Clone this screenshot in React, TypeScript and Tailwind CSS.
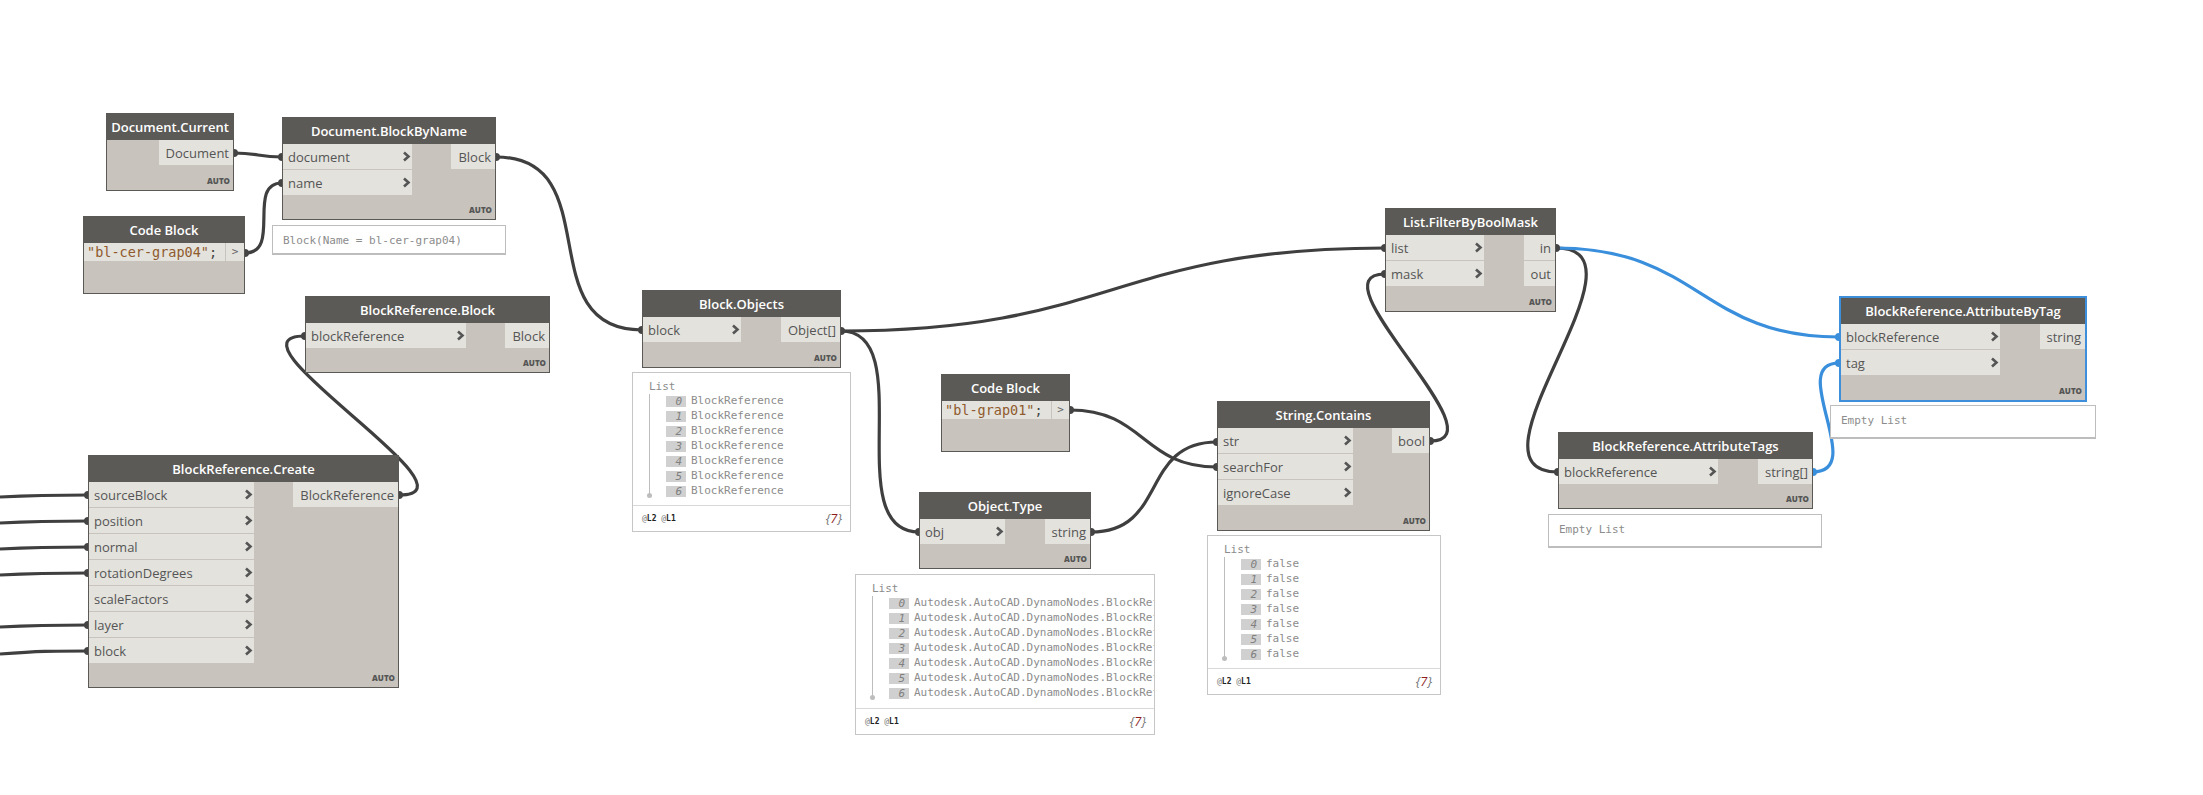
import React from 'react'

const uiFont = "font-['Open_Sans',sans-serif]"

const wires = [
  'M234 153 C258 153 258 157 282 157',
  'M245 253 C282 253 246 183 282 183',
  'M496 157 C610 157 528 330 642 330',
  'M841 331 C1113 331 1113 248 1385 248',
  'M841 331 C920 331 838 532 919 532',
  'M1091 532 C1168 532 1140 442 1217 442',
  'M1070 410 C1145 410 1142 467 1217 467',
  'M1430 441 C1505 441 1310 274 1385 274',
  'M1556 248 C1660 248 1454 472 1558 472',
  'M399 495 C489 495 215 336 305 336',
  'M0 497 C40 495 50 495 88 495',
  'M0 523 C40 521 50 521 88 521',
  'M0 549 C40 547 50 547 88 547',
  'M0 575 C40 573 50 573 88 573',
  'M0 627 C40 625 50 625 88 625',
  'M0 654 C40 651 50 651 88 651',
]

const blueWires = [
  'M1556 248 C1700 248 1700 337 1839 337',
  'M1813 472 C1868 472 1786 363 1839 363',
]

const ports = [
  [234, 153], [282, 157], [282, 183], [245, 253], [496, 157], [642, 330], [841, 331], [305, 336], [399, 495],
  [88, 495], [88, 521], [88, 547], [88, 573], [88, 625], [88, 651], [919, 532], [1091, 532], [1070, 410],
  [1217, 442], [1217, 467], [1430, 441], [1385, 248], [1385, 274], [1556, 248], [1558, 472],
]

const bluePorts = [[1839, 337], [1839, 363], [1813, 472]]

function Chevron() {
  return (
    <svg width="9" height="11" viewBox="0 0 9 11" className="shrink-0">
      <path d="M2 1.5 L6.5 5.5 L2 9.5" fill="none" stroke="#555555" strokeWidth="2.6" />
    </svg>
  )
}

function Node({ pos, title, inputs, outputs, inWidth, outWidth, selected }: {
  pos: string
  title: string
  inputs: string[]
  outputs: string[]
  inWidth: string
  outWidth: string
  selected?: boolean
}) {
  return (
    <div className={`absolute flex flex-col bg-[#c8c4bd] ${uiFont} ${pos} ${selected ? 'border-2 border-[#3d8fdb]' : 'border border-[#5b5955]'}`}>
      <div className="h-[26px] shrink-0 pt-[2px] bg-[#5c5a57] text-white text-[13px] font-semibold flex items-center justify-center whitespace-nowrap">
        {title}
      </div>
      <div className="flex justify-between flex-1">
        <div className={`flex flex-col gap-px ${inWidth}`}>
          {inputs.map((name) => (
            <div key={name} className="h-[25px] bg-[#e3e2dd] text-[#555555] text-[13px] flex items-center justify-between pl-[5px] pr-[1px]">
              <span className="pt-[2px]">{name}</span>
              <Chevron />
            </div>
          ))}
        </div>
        <div className={`flex flex-col gap-px ${outWidth}`}>
          {outputs.map((name) => (
            <div key={name} className="h-[25px] pt-[2px] bg-[#e3e2dd] text-[#555555] text-[13px] flex items-center justify-end pr-[4px] whitespace-nowrap">
              {name}
            </div>
          ))}
        </div>
      </div>
      <div className="h-[20px] shrink-0 pt-[1px] flex items-center justify-end pr-[3px] text-[8px] font-extrabold text-[#555555]">AUTO</div>
    </div>
  )
}

function CodeBlock({ pos, code, codeWidth }: { pos: string; code: string; codeWidth: string }) {
  return (
    <div className={`absolute flex flex-col bg-[#c8c4bd] border border-[#5b5955] ${pos}`}>
      <div className={`h-[26px] pt-[2px] bg-[#5c5a57] text-white text-[13px] font-semibold flex items-center justify-center ${uiFont}`}>Code Block</div>
      <div className="flex h-[18px] gap-px">
        <div className={`bg-[#e3e2dd] text-[13.5px] leading-[18px] pl-[3px] whitespace-nowrap font-['DejaVu_Sans_Mono',monospace] ${codeWidth}`}>
          <span className="text-[#8f5a2c]">{code}</span><span className="text-[#444444]">;</span>
        </div>
        <div className="flex-1 bg-[#e3e2dd] text-[#666666] text-[11px] leading-[18px] text-center font-['DejaVu_Sans_Mono',monospace]">&gt;</div>
      </div>
    </div>
  )
}

function ListPreview({ pos, item }: { pos: string; item: string }) {
  const rows = ['0', '1', '2', '3', '4', '5', '6']
  return (
    <div className={`absolute flex flex-col bg-white border border-[#c6c6c6] font-['DejaVu_Sans_Mono',monospace] text-[11px] text-[#8c8c8c] ${pos}`}>
      <div className="flex-1 overflow-hidden pl-4 pt-[7px]">
        <div className="h-[14px] leading-[14px]">List</div>
        <div className="flex">
          <div className="relative w-[17px] h-[102px] shrink-0 border-l border-[#bdbdbd]">
            <span className="absolute -left-[3px] -bottom-[2px] w-[5px] h-[5px] rounded-full bg-[#bdbdbd]" />
          </div>
          <div className="flex flex-col">
            {rows.map((n) => (
              <div key={n} className="h-[15px] flex items-center gap-[5px] whitespace-nowrap">
                <span className="w-[20px] h-[11px] bg-[#d0d0d0] text-[#808080] italic text-right pr-[4px] leading-[11px] shrink-0">{n}</span>
                <span>{item}</span>
              </div>
            ))}
          </div>
        </div>
      </div>
      <div className="h-[26px] shrink-0 border-t border-[#d8d8d8] flex items-center justify-between pl-[9px] pr-[8px]">
        <span className="text-[8px] text-[#777777]">@<b className="text-[#222222]">L2</b> @<b className="text-[#222222]">L1</b></span>
        <span className={`italic text-[13px] text-[#777777] ${uiFont}`}>{'{'}<span className="text-[#8f1d1d]">7</span>{'}'}</span>
      </div>
    </div>
  )
}

function Note({ pos, text }: { pos: string; text: string }) {
  return (
    <div className={`absolute bg-white border border-[#bdbdbd] border-b-2 pl-[10px] pt-[7px] font-['DejaVu_Sans_Mono',monospace] text-[11px] text-[#8c8c8c] ${pos}`}>
      {text}
    </div>
  )
}

export default function App() {
  return (
    <div className="relative w-[2203px] h-[795px] bg-white overflow-hidden">
      {/* wires sit under the nodes */}
      <svg width="2203" height="795" className="absolute inset-0">
        {wires.map((d) => <path key={d} d={d} fill="none" stroke="#3f3f3f" strokeWidth="3.2" />)}
        {blueWires.map((d) => <path key={d} d={d} fill="none" stroke="#3a8fdc" strokeWidth="3.2" />)}
        {ports.map(([x, y]) => <circle key={`${x}-${y}`} cx={x} cy={y} r="4" fill="#444444" />)}
        {bluePorts.map(([x, y]) => <circle key={`${x}-${y}`} cx={x} cy={y} r="4" fill="#3a8fdc" />)}
      </svg>

      <Node pos="left-[106px] top-[113px] w-[128px] h-[78px]" title="Document.Current" inputs={[]} outputs={['Document']} inWidth="w-0" outWidth="w-[74px]" />
      <Node pos="left-[282px] top-[117px] w-[214px] h-[103px]" title="Document.BlockByName" inputs={['document', 'name']} outputs={['Block']} inWidth="w-[129px]" outWidth="w-[44px]" />
      <Note pos="left-[272px] top-[225px] w-[234px] h-[30px]" text="Block(Name = bl-cer-grap04)" />
      <CodeBlock pos="left-[83px] top-[216px] w-[162px] h-[78px]" code={'"bl-cer-grap04"'} codeWidth="w-[141px]" />

      <Node pos="left-[305px] top-[296px] w-[245px] h-[77px]" title="BlockReference.Block" inputs={['blockReference']} outputs={['Block']} inWidth="w-[160px]" outWidth="w-[44px]" />
      <Node
        pos="left-[88px] top-[455px] w-[311px] h-[233px]"
        title="BlockReference.Create"
        inputs={['sourceBlock', 'position', 'normal', 'rotationDegrees', 'scaleFactors', 'layer', 'block']}
        outputs={['BlockReference']}
        inWidth="w-[165px]"
        outWidth="w-[105px]"
      />

      <Node pos="left-[642px] top-[290px] w-[199px] h-[78px]" title="Block.Objects" inputs={['block']} outputs={['Object[]']} inWidth="w-[98px]" outWidth="w-[59px]" />
      <ListPreview pos="left-[632px] top-[372px] w-[219px] h-[160px]" item="BlockReference" />

      <CodeBlock pos="left-[941px] top-[374px] w-[129px] h-[78px]" code={'"bl-grap01"'} codeWidth="w-[109px]" />

      <Node pos="left-[919px] top-[492px] w-[172px] h-[77px]" title="Object.Type" inputs={['obj']} outputs={['string']} inWidth="w-[85px]" outWidth="w-[45px]" />
      <ListPreview pos="left-[855px] top-[574px] w-[300px] h-[161px]" item="Autodesk.AutoCAD.DynamoNodes.BlockReference" />

      <Node pos="left-[1217px] top-[401px] w-[213px] h-[130px]" title="String.Contains" inputs={['str', 'searchFor', 'ignoreCase']} outputs={['bool']} inWidth="w-[135px]" outWidth="w-[37px]" />
      <ListPreview pos="left-[1207px] top-[535px] w-[234px] h-[160px]" item="false" />

      <Node pos="left-[1385px] top-[208px] w-[171px] h-[104px]" title="List.FilterByBoolMask" inputs={['list', 'mask']} outputs={['in', 'out']} inWidth="w-[98px]" outWidth="w-[31px]" />

      <Node pos="left-[1558px] top-[432px] w-[255px] h-[77px]" title="BlockReference.AttributeTags" inputs={['blockReference']} outputs={['string[]']} inWidth="w-[159px]" outWidth="w-[54px]" />
      <Note pos="left-[1548px] top-[514px] w-[274px] h-[34px]" text="Empty List" />

      <Node pos="left-[1839px] top-[296px] w-[248px] h-[106px]" title="BlockReference.AttributeByTag" inputs={['blockReference', 'tag']} outputs={['string']} inWidth="w-[159px]" outWidth="w-[45px]" selected />
      <Note pos="left-[1830px] top-[405px] w-[266px] h-[34px]" text="Empty List" />
    </div>
  )
}
